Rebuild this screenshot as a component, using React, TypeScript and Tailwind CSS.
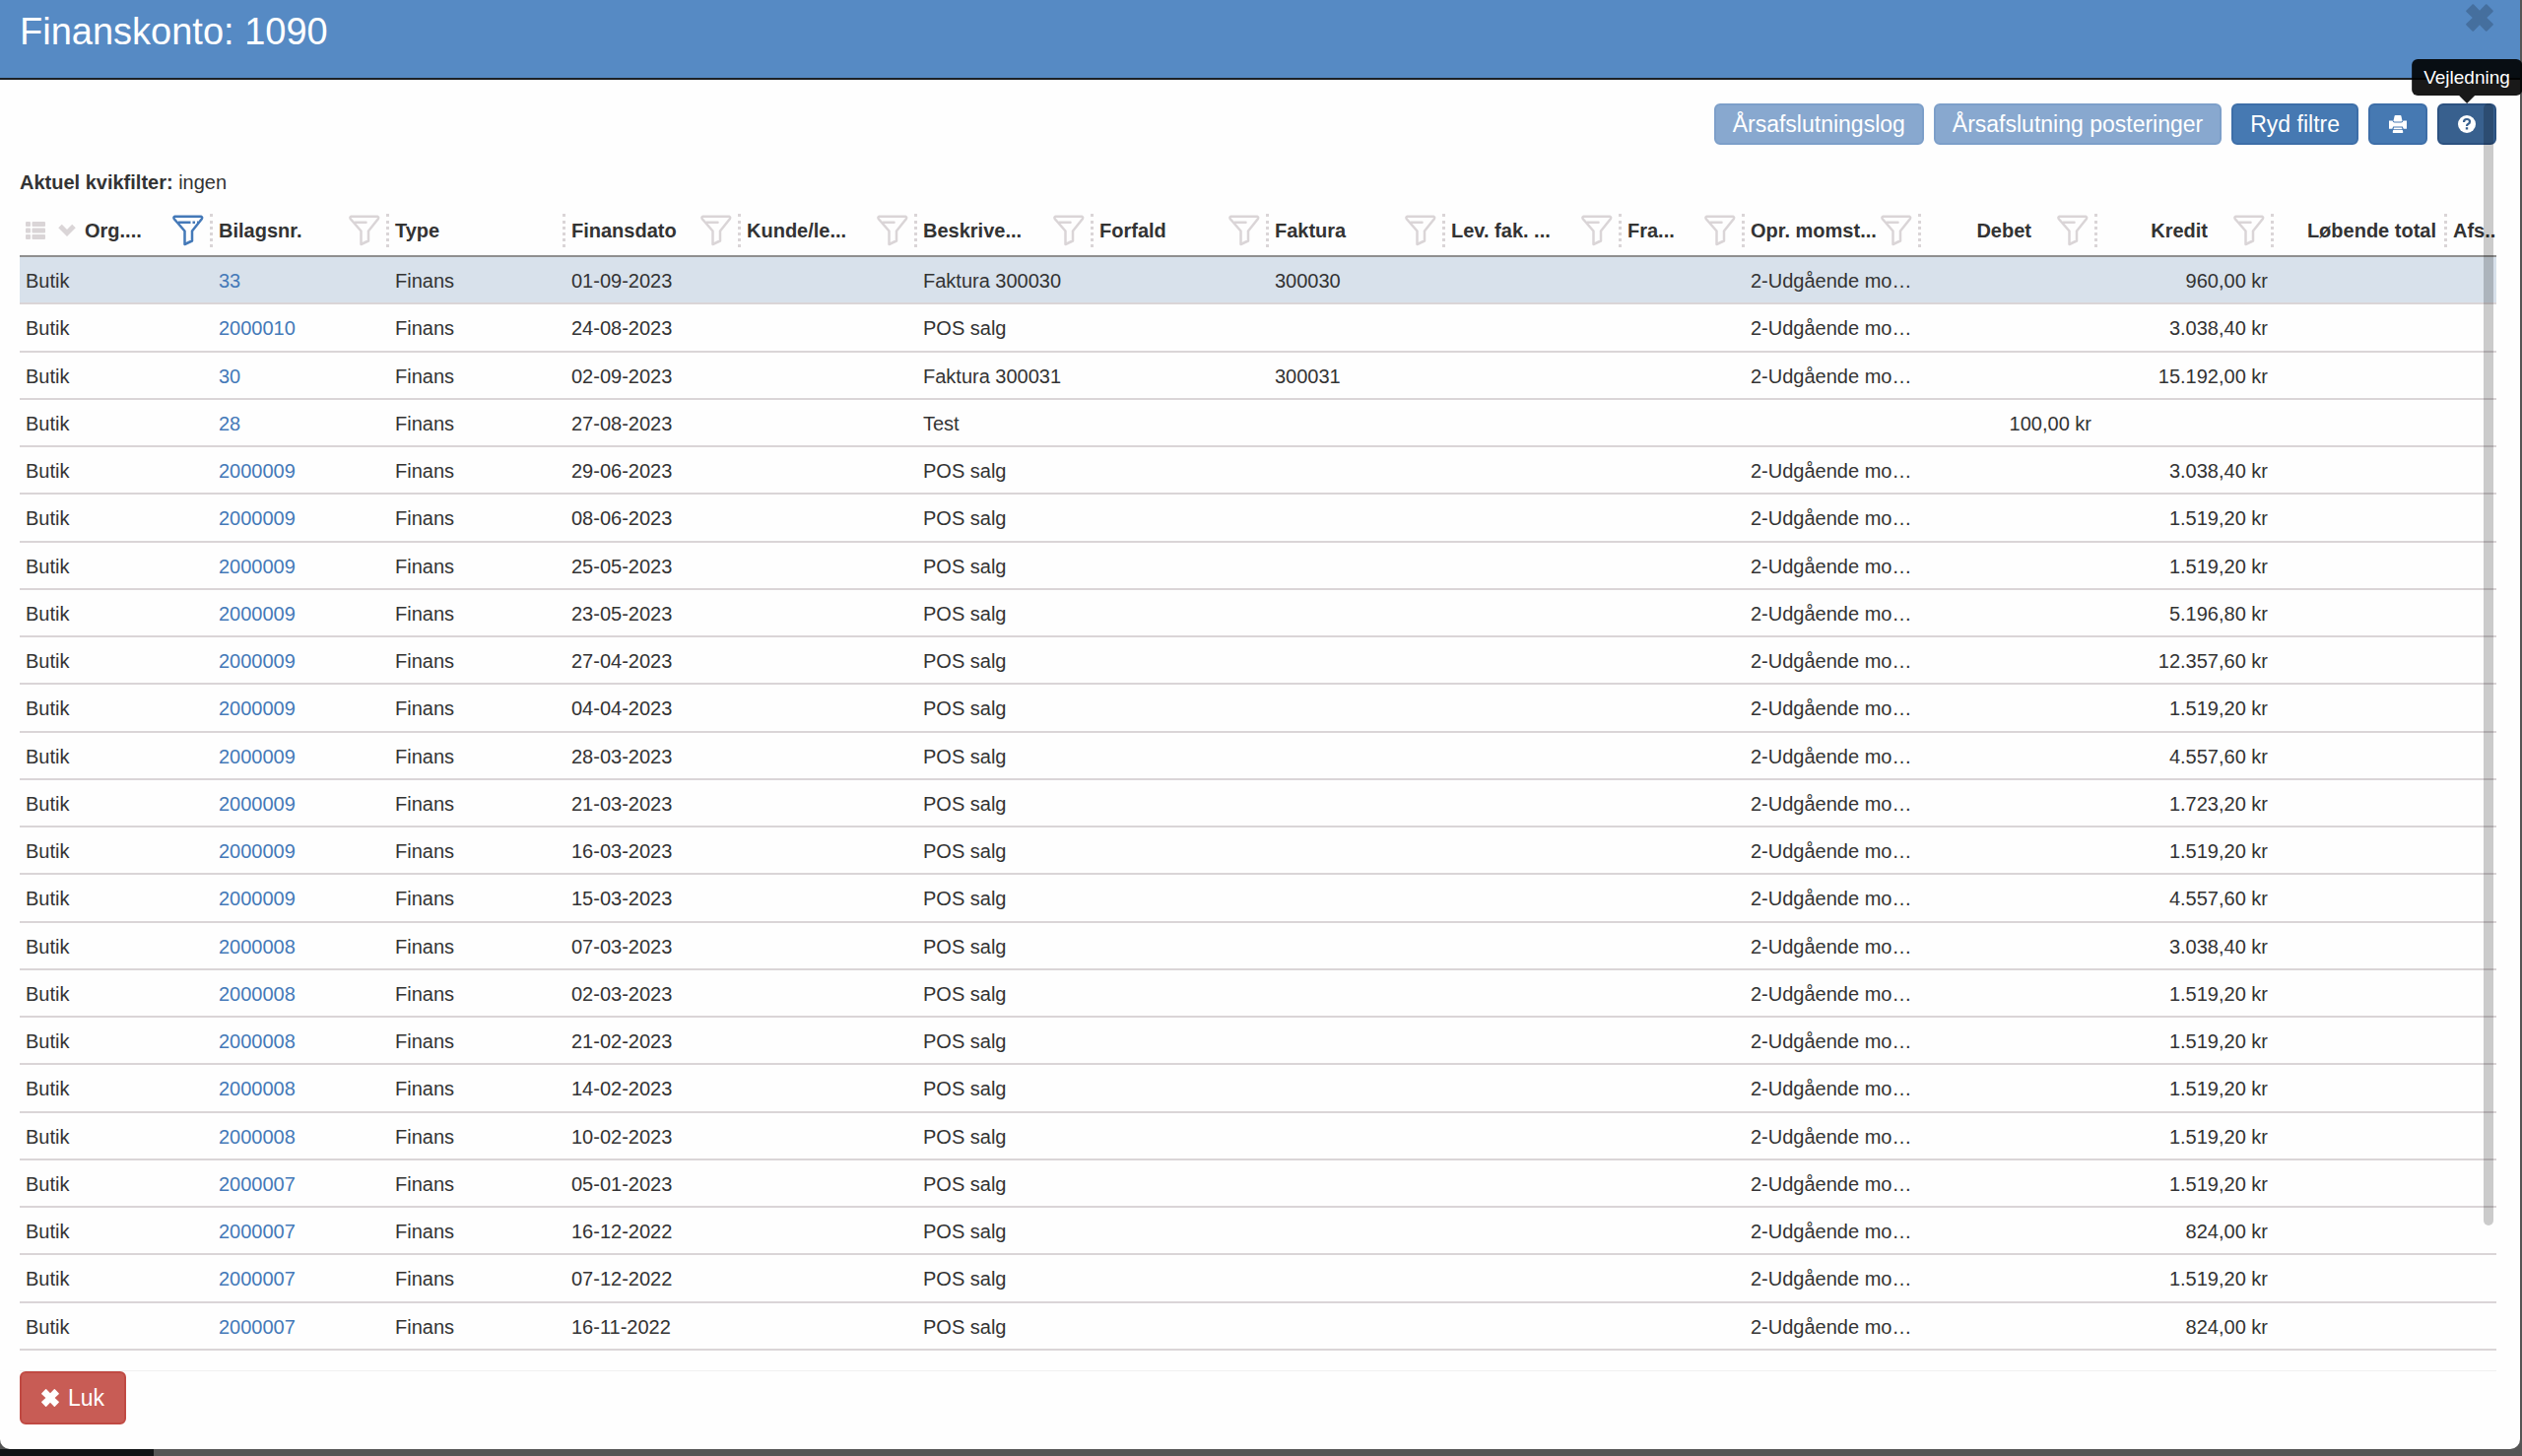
import type { ReactNode } from "react";

type Column = {
  label: string;
  width: string;
  filter?: "on" | "off";
  align?: string;
  divider?: boolean;
};

const left = "text-left";

const columns: Column[] = [
  { label: "Org....", width: "w-[196px]", filter: "on", divider: true },
  { label: "Bilagsnr.", width: "w-[179px]", filter: "off", divider: true },
  { label: "Type", width: "w-[179px]", divider: true },
  { label: "Finansdato", width: "w-[178px]", filter: "off", divider: true },
  { label: "Kunde/le...", width: "w-[179px]", filter: "off", divider: true },
  { label: "Beskrive...", width: "w-[179px]", filter: "off", divider: true },
  { label: "Forfald", width: "w-[178px]", filter: "off", divider: true },
  { label: "Faktura", width: "w-[179px]", filter: "off", divider: true },
  { label: "Lev. fak. ...", width: "w-[179px]", filter: "off", divider: true },
  { label: "Fra...", width: "w-[125px]", filter: "off", divider: true },
  { label: "Opr. momst...", width: "w-[179px]", filter: "off", divider: true },
  { label: "Debet", width: "w-[179px]", filter: "off", align: "text-right pr-[26px]", divider: true },
  { label: "Kredit", width: "w-[179px]", filter: "off", align: "text-right pr-[26px]", divider: true },
  { label: "Løbende total", width: "w-[176px]", align: "text-right pr-2", divider: true },
  { label: "Afs..", width: "w-[50px]" },
];

type Row = {
  no: string;
  date: string;
  text?: string;
  invoice?: string;
  debit?: string;
  credit?: string;
};

const rows: Row[] = [
  { no: "33", date: "01-09-2023", text: "Faktura 300030", invoice: "300030", credit: "960,00" },
  { no: "2000010", date: "24-08-2023", credit: "3.038,40" },
  { no: "30", date: "02-09-2023", text: "Faktura 300031", invoice: "300031", credit: "15.192,00" },
  { no: "28", date: "27-08-2023", text: "Test", debit: "100,00" },
  { no: "2000009", date: "29-06-2023", credit: "3.038,40" },
  { no: "2000009", date: "08-06-2023", credit: "1.519,20" },
  { no: "2000009", date: "25-05-2023", credit: "1.519,20" },
  { no: "2000009", date: "23-05-2023", credit: "5.196,80" },
  { no: "2000009", date: "27-04-2023", credit: "12.357,60" },
  { no: "2000009", date: "04-04-2023", credit: "1.519,20" },
  { no: "2000009", date: "28-03-2023", credit: "4.557,60" },
  { no: "2000009", date: "21-03-2023", credit: "1.723,20" },
  { no: "2000009", date: "16-03-2023", credit: "1.519,20" },
  { no: "2000009", date: "15-03-2023", credit: "4.557,60" },
  { no: "2000008", date: "07-03-2023", credit: "3.038,40" },
  { no: "2000008", date: "02-03-2023", credit: "1.519,20" },
  { no: "2000008", date: "21-02-2023", credit: "1.519,20" },
  { no: "2000008", date: "14-02-2023", credit: "1.519,20" },
  { no: "2000008", date: "10-02-2023", credit: "1.519,20" },
  { no: "2000007", date: "05-01-2023", credit: "1.519,20" },
  { no: "2000007", date: "16-12-2022", credit: "824,00" },
  { no: "2000007", date: "07-12-2022", credit: "1.519,20" },
  { no: "2000007", date: "16-11-2022", credit: "824,00" },
];

function FilterIcon({ active }: { active: boolean }) {
  return (
    <svg viewBox="0 0 32 32" className="size-8" fill="none" stroke="currentColor" strokeWidth="2.5" aria-hidden="true">
      <path d="M2.500 1.800h26.500q1.800.6.8 2.400L20 16.500V26.500L12.500 30V16.500L1.800 4.200q-1-1.800.7-2.400Z" strokeLinejoin="round" />
      <path d={active ? "M6 7.700h12.500M20.500 7.700h2.500M25 7.700h1" : "M6.500 7.700h11"} strokeLinecap={active ? "butt" : "round"} />
    </svg>
  );
}

function CrossIcon({ className }: { className: string }) {
  return (
    <svg viewBox="0 0 28 28" className={className} fill="currentColor" aria-hidden="true">
      <path d="M6.500 0.500q.8-.7 1.500 0L14 6.800 20 .5q.7-.7 1.500 0l6 6q.7.8 0 1.500L21.200 14l6.300 6q.7.7 0 1.500l-6 6q-.8.7-1.500 0L14 21.200 8 27.500q-.7.7-1.500 0l-6-6q-.7-.8 0-1.500L6.800 14 .5 8q-.7-.7 0-1.500Z" />
    </svg>
  );
}

function ListIcon() {
  return (
    <svg viewBox="0 0 20 18" className="h-[18px] w-5" fill="currentColor" aria-hidden="true">
      {[0, 6.5, 13].map((y) => (
        <g key={y}>
          <rect x="0" y={y} width="5" height="5" rx="1" />
          <rect x="6.500" y={y} width="13.500" height="5" rx="1" />
        </g>
      ))}
    </svg>
  );
}

function PrintIcon() {
  return (
    <svg viewBox="0 0 18 18" className="size-[18px]" fill="currentColor" aria-hidden="true">
      <path d="M6.500 0h5q.7 0 .9.700l1 4.600q.1 1.200-1 1.200H5.600q-1.100 0-1-1.200l1-4.600Q5.800 0 6.500 0Z" />
      <path d="M0 5.500h3.600q.2 2 2 2h6.800q1.800 0 2-2H18v8.300h-3.300l-.9-2.300H4.200l-.9 2.300H0Z" />
      <path d="M5 12.600h8l.5 1.600h-9ZM4.200 15h9.600l.5 2q.1 1-.8 1h-9q-.9 0-.8-1Z" />
    </svg>
  );
}

function HelpIcon() {
  return (
    <svg viewBox="0 0 18 18" className="size-[18px]" aria-hidden="true">
      <circle cx="9" cy="9" r="9" fill="white" />
      <path d="M6 7q0-3 3-3t3 2.500Q12 8 10.500 8.800 9 9.500 9 11" fill="none" stroke="#38608e" strokeWidth="2.200" />
      <rect x="7.800" y="12.200" width="2.400" height="2.300" fill="#38608e" />
    </svg>
  );
}

function ToolButton({ children, tone, label }: { children: ReactNode; tone: string; label?: string }) {
  return (
    <button
      type="button"
      aria-label={label}
      className={"flex h-[42px] items-center justify-center rounded-[6px] border-2 text-[23px] leading-none text-white " + (label ? "px-[19px] " : "px-[17px] ") + tone}
    >
      {children}
    </button>
  );
}

const cell = "overflow-hidden border-b-2 border-[#dad5d7] px-[6px] pt-[2px] pb-0 whitespace-nowrap";

export default function App() {
  return (
    <div className="flex min-h-screen flex-col bg-[#555] pr-[2px] font-['Liberation_Sans',Arial,sans-serif] text-[20px] leading-[28px] text-[#333]">
      <div role="dialog" aria-labelledby="title" className="flex flex-1 flex-col rounded-b-[10px] bg-[#fefefe]">
        <header className="flex h-[81px] items-start justify-between border-b-2 border-[#1c2126] bg-[#568ac4] pr-[27px] pl-5">
          <h1 id="title" className="pt-2 text-[38px] leading-[48px] text-white">Finanskonto: 1090</h1>
          <button type="button" aria-label="Luk vindue" className="mt-1 text-[#456f9e]">
            <CrossIcon className="size-7" />
          </button>
        </header>

        <main className="relative flex flex-1 flex-col px-5 pr-6 pt-6">
          <div className="flex justify-end gap-[10px]">
            <ToolButton tone="border-[#7d9fc9] bg-[#88a8cf]">Årsafslutningslog</ToolButton>
            <ToolButton tone="border-[#7d9fc9] bg-[#88a8cf]">Årsafslutning posteringer</ToolButton>
            <ToolButton tone="border-[#3d6ea8] bg-[#4679b2]">Ryd filtre</ToolButton>
            <ToolButton tone="border-[#3d6ea8] bg-[#4679b2]" label="Udskriv">
              <PrintIcon />
            </ToolButton>
            <div className="relative">
              <ToolButton tone="border-[#2c5180] bg-[#38608e]" label="Vejledning">
                <HelpIcon />
              </ToolButton>
              <div role="tooltip" className="absolute bottom-full left-1/2 flex -translate-x-1/2 flex-col items-center">
                <span className="rounded-[6px] bg-black/90 px-3 py-1 text-[19px] leading-[29px] text-white">Vejledning</span>
                <svg viewBox="0 0 16 8" className="h-2 w-4" aria-hidden="true">
                  <path d="M0 0h16L8 8Z" fillOpacity="0.9" />
                </svg>
              </div>
            </div>
          </div>

          <p className="mt-6 leading-[28px]">
            <strong>Aktuel kvikfilter:</strong> ingen
          </p>

          <div className="flex flex-1">
            <table className="w-full table-fixed border-separate border-spacing-0">
              <thead>
                <tr className="h-[62px]">
                  {columns.map((c) => (
                    <th key={c.label} scope="col" className={c.width + " border-b-2 border-[#8f8f8f] p-0 pb-2 align-bottom whitespace-nowrap"}>
                      <div className="flex h-[34px] items-center pl-[6px]">
                        {c.filter === "on" && (
                          <span className="flex w-15 shrink-0 items-center gap-[13px] text-[#dad5d7]">
                            <ListIcon />
                            <svg viewBox="0 0 18 14" className="h-[14px] w-[18px]" fill="none" stroke="currentColor" strokeWidth="5" aria-hidden="true">
                              <path d="M2 2.500 9 9.500 16 2.500" />
                            </svg>
                          </span>
                        )}
                        <span className={"flex-1 " + (c.align ?? left)}>{c.label}</span>
                        {c.filter && (
                          <button type="button" aria-label={"Filtrer " + c.label} className={c.filter === "on" ? "mr-[6px] shrink-0 text-[#4479b8]" : "mr-[6px] shrink-0 text-[#dad5d7]"}>
                            <FilterIcon active={c.filter === "on"} />
                          </button>
                        )}
                        {c.divider && <span className="h-[34px] shrink-0 border-r-3 border-dotted border-[#dad5d7]" />}
                      </div>
                    </th>
                  ))}
                </tr>
              </thead>
              <tbody>
                {rows.map((r, i) => (
                  <tr key={i} className={i === 0 ? "bg-[#d8e1eb]" : ""}>
                    <td className={cell}>Butik</td>
                    <td className={cell}>
                      <a href="#bilag" className="text-[#4479b8]">{r.no}</a>
                    </td>
                    <td className={cell}>Finans</td>
                    <td className={cell}>{r.date}</td>
                    <td className={cell} />
                    <td className={cell}>{r.text ?? "POS salg"}</td>
                    <td className={cell} />
                    <td className={cell}>{r.invoice}</td>
                    <td className={cell} />
                    <td className={cell} />
                    <td className={cell}>{r.credit && "2-Udgående mo…"}</td>
                    <td className={cell + " text-right"}>{r.debit && r.debit + " kr"}</td>
                    <td className={cell + " text-right"}>{r.credit && r.credit + " kr"}</td>
                    <td className={cell} />
                    <td className={cell} />
                  </tr>
                ))}
              </tbody>
            </table>
          </div>
          <div className="absolute top-6 right-[27px] bottom-[127px] w-[10px] rounded-full bg-black/20" />
        </main>

        <footer className="mx-5 mt-5 mr-6 border-t border-[#f0f0f0] pb-[25px]">
          <button type="button" className="flex h-[54px] items-center gap-[9px] rounded-[6px] border-2 border-[#c04a43] bg-[#c85c55] px-5 text-[23px] text-white">
            <CrossIcon className="size-[18px]" />
            Luk
          </button>
        </footer>
      </div>
      <div className="h-[7px]">
        <div className="h-full w-[156px] bg-[#111416]" />
      </div>
    </div>
  );
}
